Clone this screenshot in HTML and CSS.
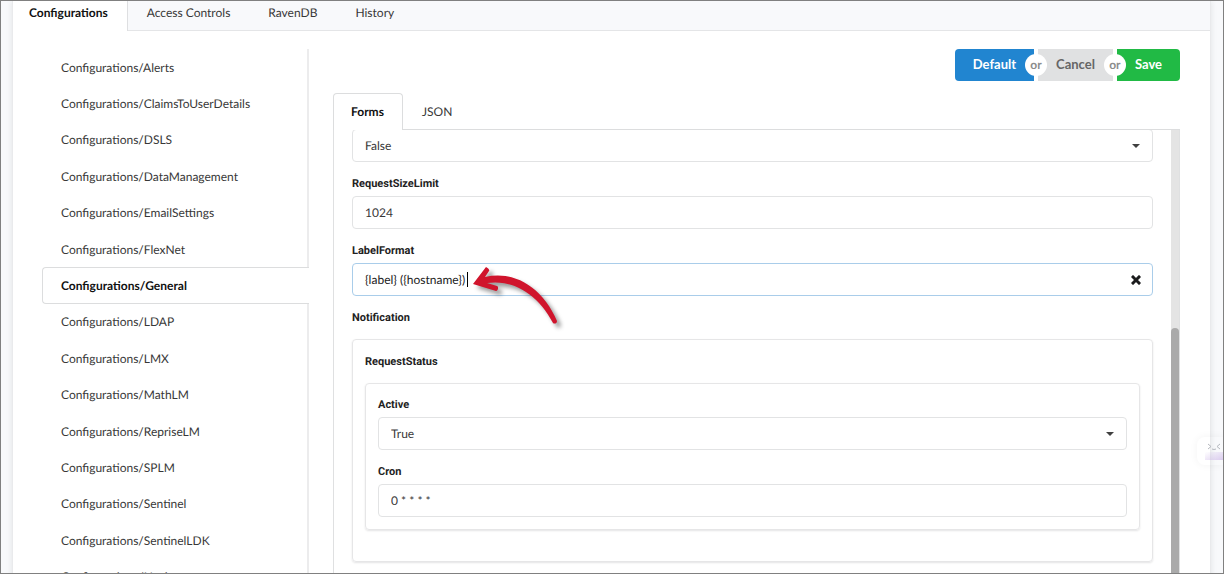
FILE: index.html
```html
<!DOCTYPE html>
<html lang="en">
<head>
    <meta charset="UTF-8">
    <meta name="viewport" content="width=device-width, initial-scale=1.0">
    <title>Configurations</title>
    <link rel="stylesheet" href="styles.css">
</head>
<body>
    <main class="page">
        <nav class="top-tabs">
            <a class="tab active" href="#configurations">Configurations</a>
            <a class="tab" href="#access">Access Controls</a>
            <a class="tab" href="#ravendb">RavenDB</a>
            <a class="tab" href="#history">History</a>
        </nav>

        <div class="columns">
            <nav class="side-menu">
                <a href="#alerts">Configurations/Alerts</a>
                <a href="#claims">Configurations/ClaimsToUserDetails</a>
                <a href="#dsls">Configurations/DSLS</a>
                <a href="#data">Configurations/DataManagement</a>
                <a href="#email">Configurations/EmailSettings</a>
                <a href="#flexnet">Configurations/FlexNet</a>
                <a class="active" href="#general">Configurations/General</a>
                <a href="#ldap">Configurations/LDAP</a>
                <a href="#lmx">Configurations/LMX</a>
                <a href="#mathlm">Configurations/MathLM</a>
                <a href="#reprise">Configurations/RepriseLM</a>
                <a href="#splm">Configurations/SPLM</a>
                <a href="#sentinel">Configurations/Sentinel</a>
                <a href="#sentinelldk">Configurations/SentinelLDK</a>
                <a href="#navigator">Configurations/Navigator</a>
            </nav>

            <section class="content">
                <div class="buttons">
                    <button class="btn blue" type="button">Default</button>
                    <span class="or"><span>or</span></span>
                    <button class="btn grey" type="button">Cancel</button>
                    <span class="or"><span>or</span></span>
                    <button class="btn green" type="button">Save</button>
                </div>

                <nav class="form-tabs">
                    <a class="tab active" href="#forms">Forms</a>
                    <a class="tab" href="#json">JSON</a>
                </nav>

                <div class="panel">
                    <form class="form">
                        <div class="select">
                            <select aria-label="Enabled">
                                <option>False</option>
                                <option>True</option>
                            </select>
                        </div>

                        <label for="size">RequestSizeLimit</label>
                        <input id="size" type="text" value="1024">

                        <label for="format">LabelFormat</label>
                        <div class="clearable">
                            <input id="format" type="text" value="{label} ({hostname})">
                            <span class="caret"></span>
                            <button class="clear" type="button" aria-label="Clear">
                                <svg width="10" height="10" viewBox="0 0 10 10">
                                    <path d="M2 2L8 8M8 2L2 8" stroke="#1b1c1d" stroke-width="3" stroke-linecap="square"/>
                                </svg>
                            </button>
                            <svg class="arrow" width="92" height="64" viewBox="0 0 92 64">
                                <path d="M0 17L13 0C15 1 17 3 16 4L12 10C42 3 70 21 84 54C84 57 81 57 80 56C66 29 42 12 14 16L24 19C26 20 25 24 23 24Z" fill="#d0142c"/>
                            </svg>
                        </div>

                        <h4>Notification</h4>
                        <div class="box outer">
                            <h4>RequestStatus</h4>
                            <div class="box inner">
                                <label for="active">Active</label>
                                <div class="select">
                                    <select id="active">
                                        <option>True</option>
                                        <option>False</option>
                                    </select>
                                </div>
                                <label for="cron">Cron</label>
                                <input id="cron" type="text" value="0 * * * *">
                            </div>
                        </div>
                    </form>
                    <div class="scrollbar"><div class="thumb"></div></div>
                </div>
            </section>
        </div>
    </main>

    <div class="widget">
        <svg width="26" height="28" viewBox="0 0 26 28">
            <path d="M11 7l3 2.500l-3 2.500M23 7l-3 2.500l3 2.500M15 12q2 1 4 0" fill="none" stroke="#b5b8be"/>
        </svg>
    </div>
</body>
</html>
```
FILE: styles.css
```css
* {
    box-sizing: border-box;
}

body {
    margin: 0;
    height: 100vh;
    padding: 0 12px 0 11px;
    overflow: hidden;
    position: relative;
    border: 1px solid #808080;
    background: #f8f9fb;
    color: #383838;
    font-family: Lato, "Liberation Sans", sans-serif;
    font-size: 12px;
    text-rendering: geometricPrecision;
}

a {
    color: inherit;
    text-decoration: none;
}

.page {
    background: #fff;
    border: solid #e9eaec;
    border-width: 0 1px;
    box-shadow: 0 0 6px rgba(34, 36, 38, 0.1);
}

.top-tabs {
    display: flex;
    height: 30px;
    background: #f8f9fb;
    border-bottom: 1px solid #e4e5e7;
}

.top-tabs .tab {
    height: 30px;
    padding: 0 19px;
    line-height: 23px;
}

.top-tabs .active {
    padding-left: 16px;
    background: #fff;
    border-right: 1px solid #dedfe1;
}

.active {
    color: #111;
    font-weight: bold;
}

.columns {
    display: grid;
    grid-template-columns: 267px 1fr;
    gap: 24px;
    padding: 18px 30px 0 29px;
}

/* side menu */
.side-menu {
    display: grid;
    grid-auto-rows: 1fr;
    height: 546px;
}

.side-menu a {
    display: flex;
    align-items: center;
    padding-left: 19px;
    border-right: 2px solid #ececed;
}

.side-menu .active {
    padding-left: 18px;
    border: 1px solid #dcddde;
    border-right: 0;
    border-radius: 4px 0 0 4px;
}

/* buttons */
.buttons {
    display: flex;
    justify-content: flex-end;
}

.btn {
    height: 32px;
    padding: 0 18px 2px;
    border: 0;
    font: bold 13px Lato, sans-serif;
    color: #fff;
}

.blue {
    background: #2185d0;
    border-radius: 4px 0 0 4px;
}

.grey {
    background: #e0e1e2;
    color: #666;
}

.green {
    background: #21ba45;
    border-radius: 0 4px 4px 0;
}

.or {
    width: 4px;
    display: flex;
    align-items: center;
    justify-content: center;
    z-index: 1;
}

.or span {
    flex: none;
    width: 22px;
    border-radius: 50%;
    background: #fff;
    color: #8c8c8c;
    font-size: 12px;
    font-weight: bold;
    line-height: 22px;
    text-align: center;
}

/* form */
.form-tabs {
    display: flex;
    margin-top: 12px;
    height: 37px;
    border-bottom: 1px solid #dcddde;
}

.form-tabs .tab {
    height: 37px;
    padding: 0 19px;
    line-height: 37px;
}

.form-tabs .active {
    padding: 0 18px 0 17px;
    background: #fff;
    border: 1px solid #dcddde;
    border-bottom: 0;
    border-radius: 4px 4px 0 0;
    line-height: 35px;
}

.panel {
    display: flex;
    height: 480px;
    overflow: hidden;
    border: solid #dfe0e1;
    border-width: 0 1px;
}

.form {
    flex: 1;
    margin-top: -1px;
    padding: 0 18px;
}

label,
h4 {
    display: block;
    margin: 14px 0 4px;
    color: #222;
    font: bold 11px/16px Roboto, sans-serif;
}

h4 {
    margin-bottom: 13px;
}

input,
select {
    display: block;
    width: 100%;
    height: 33px;
    padding: 0 12px;
    border: 1px solid #e2e3e4;
    border-radius: 4px;
    outline: 0;
    appearance: none;
    background: #fff;
    color: #383838;
    font: 12px Lato, sans-serif;
    text-rendering: inherit;
}

.select,
.clearable {
    position: relative;
}

.select::after {
    content: "";
    position: absolute;
    right: 13px;
    top: 15px;
    border: 4px solid transparent;
    border-top-color: #404040;
    border-bottom: 0;
}

.clearable input {
    border-color: #a9cdea;
    color: #222;
}

.caret {
    position: absolute;
    left: 115px;
    top: 9px;
    width: 1px;
    height: 15px;
    background: #000;
}

.clear {
    position: absolute;
    right: 12px;
    top: 12px;
    display: flex;
    padding: 0;
    border: 0;
    background: none;
}

.arrow {
    position: absolute;
    left: 121px;
    top: 4px;
    overflow: visible;
    filter: drop-shadow(4px 4px 2px rgba(0, 0, 0, 0.4));
}

.box {
    padding: 12px;
    border: 1px solid #e6e6e7;
    border-radius: 4px;
    box-shadow: 0 1px 2px rgba(34, 36, 38, 0.12);
}

.box > :first-child {
    margin-top: 0;
}

.outer {
    padding: 14px 12px 31px;
}

.inner {
    padding-top: 13px;
}

.scrollbar {
    width: 8px;
    padding-top: 198px;
    background: #e4e4e4;
}

.thumb {
    height: 100%;
    border-radius: 4px 4px 0 0;
    background: #aaa;
}

/* floating assistant, sits at the right edge of the window */
.widget {
    position: absolute;
    right: 0;
    top: 436px;
    width: 26px;
    height: 28px;
    border-radius: 8px 0 0 8px;
    box-shadow: 0 0 8px rgba(0, 0, 0, 0.05);
}

.widget::after {
    content: "";
    position: absolute;
    right: 0;
    bottom: 5px;
    width: 18px;
    height: 8px;
    background: linear-gradient(to top left, rgba(190, 160, 225, 0.5), transparent);
}
```
